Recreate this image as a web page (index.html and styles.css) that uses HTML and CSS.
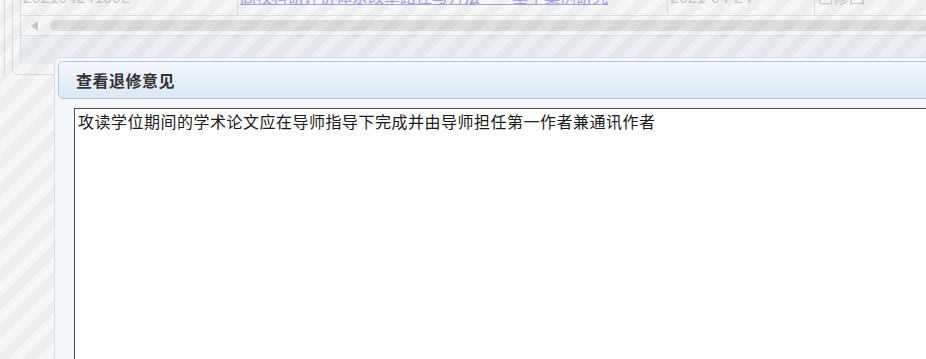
FILE: index.html
```html
<!DOCTYPE html>
<html>
<head>
    <meta charset="utf-8"/>
    <title>查看退修意见</title>
    <link rel="stylesheet" href="styles.css">
</head>
<body>
<div class="layout">
    <div class="panel">
        <div class="grid">
            <div class="row">
                <div class="cell c1">202104241002</div>
                <div class="cell c2"><a href="#">高校科研评价体系改革路径与方法——基于案例研究</a></div>
                <div class="cell c3">2021-04-24</div>
                <div class="cell c4">已修回</div>
            </div>
            <div class="hscroll">
                <span class="arrow"></span>
                <span class="thumb"></span>
            </div>
            <div class="pager"></div>
        </div>
    </div>
</div>

<!-- 遮罩层 -->
<div class="mask"></div>

<div class="dialog">
    <div class="dialog-head">查看退修意见</div>
    <div class="dialog-body">
        <textarea readonly>攻读学位期间的学术论文应在导师指导下完成并由导师担任第一作者兼通讯作者</textarea>
    </div>
</div>
</body>
</html>
```
FILE: styles.css
```css
html,body{margin:0;padding:0;height:100%;overflow:hidden;}
body{background:#fff;font-family:"Liberation Sans","Noto Sans CJK SC",sans-serif;}
a{color:#aaa6f7;text-decoration:underline;}

.layout{width:1100px;margin-left:4px;border-left:1px solid #e2e2e2;padding-left:7px;}
.panel{border:1px solid #e4e4e4;border-top:none;border-radius:0 0 6px 6px;padding:0 7px 10px;}
.grid{border-left:1px solid #e6e6e6;}

.row{display:flex;margin-top:-12px;height:27px;border-bottom:1px solid #e8e8e8;}
.cell{padding-left:2px;font-size:16px;line-height:20px;color:#d0d0d0;white-space:nowrap;overflow:hidden;border-left:1px solid #e8e8e8;}
.c1{width:214px;border-left:none;}
.c2{width:427px;}
.c3{width:144px;}
.c4{flex:1;}

.hscroll{display:flex;align-items:center;height:19px;border-bottom:1px solid #e8e8e8;}
.arrow{width:0;height:0;border-top:5px solid transparent;border-bottom:5px solid transparent;border-right:7px solid #cdcdcd;margin-left:10px;}
.thumb{flex:1;height:11px;margin-left:12px;background:#e6e6e6;border-radius:6px 0 0 6px;}

.pager{height:28px;background:#f5f8fb;}

.mask{position:fixed;left:0;top:0;right:0;bottom:0;background:repeating-linear-gradient(135deg,rgba(0,0,0,0.035) 0,rgba(0,0,0,0.035) 10px,rgba(0,0,0,0.065) 10px,rgba(0,0,0,0.065) 20px);}

.dialog{position:absolute;left:54px;top:57px;width:1000px;height:400px;padding:3px;border:1px solid #d9dde1;border-radius:6px;background:#f4f7fa;}
.dialog-head{height:36px;line-height:36px;padding-left:17px;border:1px solid #a9c9e4;border-radius:5px;background:linear-gradient(#f3f8fd,#dae8f5);font-family:"Noto Sans CJK SC",sans-serif;font-size:16px;font-weight:bold;letter-spacing:0.5px;color:#333;}
.dialog-body{padding:9px 0 0 16px;}
.dialog-body textarea{display:block;width:900px;height:300px;margin:0;padding:2px 3px;border:1px solid #4f4f4f;background:#fff;resize:none;outline:none;font-family:"Noto Sans CJK SC",sans-serif;font-size:16px;line-height:20px;letter-spacing:0.5px;color:#1a1a1a;}
```
